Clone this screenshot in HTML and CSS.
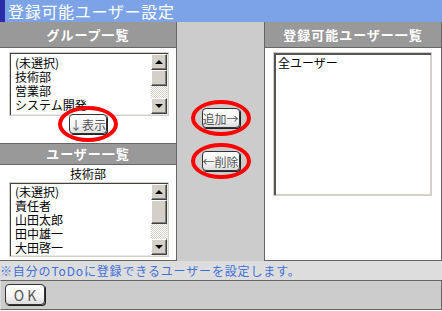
FILE: index.html
```html
<!DOCTYPE html>
<html lang="ja">
<head>
    <meta charset="UTF-8">
    <title>登録可能ユーザー設定</title>
    <link rel="stylesheet" href="styles.css">
</head>
<body>
    <div class="title">登録可能ユーザー設定</div>

    <div class="main">
        <div class="col-left">
            <div class="section-group">
                <div class="col-header">グループ一覧</div>
                <div class="listbox list-group">
                    <div class="items">
                        <div>(未選択)</div>
                        <div>技術部</div>
                        <div>営業部</div>
                        <div>システム開発</div>
                    </div>
                    <div class="scroll">
                        <div class="sb-btn"><span class="arrow-up"></span></div>
                        <div class="sb-thumb thumb-group"></div>
                        <div class="sb-track"></div>
                        <div class="sb-btn"><span class="arrow-down"></span></div>
                    </div>
                </div>
                <div class="btn-row">
                    <span class="marked"><button class="btn">↓表示</button></span>
                </div>
            </div>

            <div class="section-user">
                <div class="col-header">ユーザー一覧</div>
                <div class="group-name">技術部</div>
                <div class="listbox list-user">
                    <div class="items">
                        <div>(未選択)</div>
                        <div>責任者</div>
                        <div>山田太郎</div>
                        <div>田中雄一</div>
                        <div>大田啓一</div>
                    </div>
                    <div class="scroll">
                        <div class="sb-btn"><span class="arrow-up"></span></div>
                        <div class="sb-thumb thumb-user"></div>
                        <div class="sb-track"></div>
                        <div class="sb-btn"><span class="arrow-down"></span></div>
                    </div>
                </div>
            </div>
        </div>

        <div class="col-mid">
            <span class="marked"><button class="btn">追加→</button></span>
            <span class="marked"><button class="btn">←削除</button></span>
        </div>

        <div class="col-right">
            <div class="col-header">登録可能ユーザー一覧</div>
            <div class="listbox list-selected">
                <div class="items">
                    <div>全ユーザー</div>
                </div>
            </div>
        </div>
    </div>

    <div class="note">※自分のToDoに登録できるユーザーを設定します。</div>

    <div class="footer">
        <button class="btn btn-ok">OK</button>
    </div>
</body>
</html>
```

FILE: styles.css
```css
body {
    margin: 0;
    width: 442px;
    height: 311px;
    font-family: "Noto Sans CJK JP", "DejaVu Sans", sans-serif;
    font-size: 12px;
    color: #000;
    background: #fff;
    overflow: hidden;
}

.title {
    height: 22px;
    line-height: 22px;
    background: #7ba3e6;
    border-left: 5px solid #2a2ca8;
    padding-left: 3px;
    color: #fff;
    font-size: 16px;
    letter-spacing: 0.7px;
}

/* three columns */
.main {
    display: flex;
    height: 239px;
}

.col-left {
    width: 176px;
    border-right: 1px solid #666;
    border-bottom: 1px solid #666;
    background: #fff;
}

.col-mid {
    width: 87px;
    background: #ccc;
    display: flex;
    flex-direction: column;
    align-items: center;
    gap: 23px;
    padding-top: 86px;
    box-sizing: border-box;
}

.col-right {
    width: 176px;
    border-left: 1px solid #666;
    border-right: 1px solid #666;
    border-bottom: 1px solid #666;
    background: #fff;
}

.col-header {
    height: 25px;
    line-height: 25px;
    background: #999;
    border-bottom: 1px solid #666;
    color: #fff;
    font-size: 13px;
    font-weight: bold;
    text-align: center;
    letter-spacing: 1px;
}

.section-group {
    height: 121px;
}

.section-user .col-header {
    height: 20px;
    line-height: 20px;
    border-top: 1px solid #666;
}

.group-name {
    height: 17px;
    line-height: 17px;
    text-align: center;
}

/* list boxes */
.listbox {
    display: flex;
    box-sizing: border-box;
    margin-left: 9px;
    border: 1px solid #d4d0c8;
    box-shadow: inset 1px 1px 0 #404040, inset -1px -1px 0 #e8e8e8;
    padding: 1px;
    background: #fff;
}

.list-group {
    width: 160px;
    height: 64px;
    margin-top: 4px;
}

.list-user {
    width: 160px;
    height: 75px;
}

.list-user .items {
    padding-top: 1px;
}

.list-selected {
    width: 159px;
    height: 144px;
    margin-top: 4px;
    margin-left: 8px;
    border: 1px solid #d4d0c8;
    box-shadow: inset 2px 2px 0 #555, inset -1px -1px 0 #d4d0c8;
}

.items {
    flex: 1;
    padding: 2px 4px;
    line-height: 14px;
    white-space: nowrap;
    overflow: hidden;
}

.list-selected .items {
    padding: 2px 3px;
}

.scroll {
    width: 16px;
    display: flex;
    flex-direction: column;
}

.sb-btn,
.sb-thumb {
    box-sizing: border-box;
    background: #d4d0c8;
    border: 1px solid;
    border-color: #fff #404040 #404040 #fff;
    box-shadow: inset -1px -1px 0 #808080;
}

.sb-btn {
    height: 16px;
    display: flex;
    align-items: center;
    justify-content: center;
}

.thumb-group {
    height: 16px;
}

.thumb-user {
    height: 24px;
}

.sb-track {
    flex: 1;
    background-color: #fff;
    background-image: conic-gradient(#d4d0c8 25%, #fff 0 50%, #d4d0c8 0 75%, #fff 0);
    background-size: 2px 2px;
}

.arrow-up,
.arrow-down {
    width: 0;
    height: 0;
    border-left: 4px solid transparent;
    border-right: 4px solid transparent;
}

.arrow-up {
    border-bottom: 4px solid #000;
}

.arrow-down {
    border-top: 4px solid #000;
}

/* buttons */
.btn-row {
    display: flex;
    justify-content: center;
    margin-top: -2px;
}

.btn {
    width: 38px;
    height: 20px;
    padding: 0;
    font-family: inherit;
    font-size: 12px;
    color: #555;
    background: linear-gradient(#fff, #f4f4f4 60%, #ddd);
    border: 1px solid #333;
    border-radius: 4px;
    box-shadow: 1px 1px 0 #222;
}

.marked {
    position: relative;
    display: inline-block;
    line-height: 0;
}

/* red annotation rings */
.marked::after {
    content: "";
    position: absolute;
    top: -8px;
    bottom: -8px;
    left: -11px;
    right: -11px;
    border: 4px solid #f00;
    border-radius: 50%;
}

.note {
    height: 19px;
    line-height: 19px;
    background: #ddd;
    color: #3f6fdc;
    letter-spacing: 0.85px;
}

.footer {
    height: 30px;
    background: #ccc;
    border: 1px solid #666;
    border-left-color: #ddd;
    padding: 3px 0 0 4px;
    box-sizing: border-box;
}

.btn-ok {
    width: 40px;
    height: 21px;
    font-size: 14px;
    letter-spacing: 3px;
    padding-left: 3px;
}
```
